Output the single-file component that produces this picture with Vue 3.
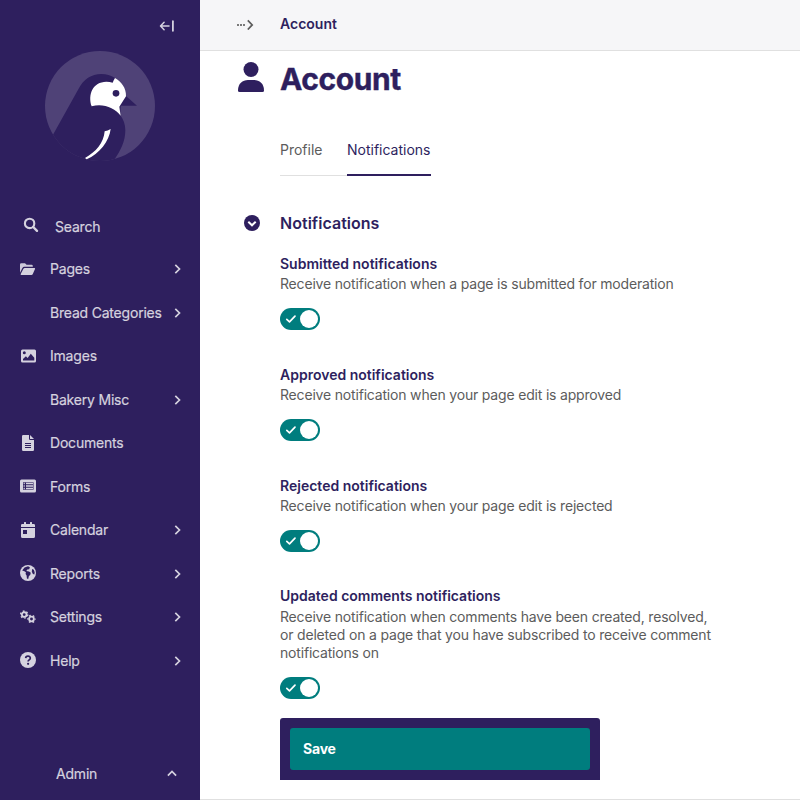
<script setup>
const menu = [
  { label: 'Pages', icon: 'folder', more: true },
  { label: 'Bread Categories', more: true },
  { label: 'Images', icon: 'image' },
  { label: 'Bakery Misc', more: true },
  { label: 'Documents', icon: 'doc' },
  { label: 'Forms', icon: 'form' },
  { label: 'Calendar', icon: 'date', more: true },
  { label: 'Reports', icon: 'globe', more: true },
  { label: 'Settings', icon: 'cogs', more: true },
  { label: 'Help', icon: 'help', more: true },
]

const fields = [
  { label: 'Submitted notifications', help: ['Receive notification when a page is submitted for moderation'] },
  { label: 'Approved notifications', help: ['Receive notification when your page edit is approved'] },
  { label: 'Rejected notifications', help: ['Receive notification when your page edit is rejected'] },
  {
    label: 'Updated comments notifications',
    help: [
      'Receive notification when comments have been created, resolved,',
      'or deleted on a page that you have subscribed to receive comment',
      'notifications on',
    ],
  },
]
</script>

<template>
  <div class="shell">
    <aside class="sidebar">
      <div class="collapse">
        <svg width="16" height="12" viewBox="0 0 16 12" fill="none" stroke="currentColor" stroke-width="1.5" stroke-linecap="round" stroke-linejoin="round">
          <path d="M10 6H1.700M5.100 2.200 1.500 6l3.600 3.800" />
          <path d="M13.900 1.200v9.600" stroke-width="1.800" />
        </svg>
      </div>
      <svg class="logo" viewBox="135 153 330 330">
        <defs>
          <clipPath id="disc"><circle cx="300" cy="318" r="165" /></clipPath>
        </defs>
        <circle cx="300" cy="318" r="165" fill="#4f4277" />
        <g clip-path="url(#disc)">
          <path d="M159 404 L235 268 C251 237 274 222 304 222 C319 222 333 226 345 234 L378 289 L362 318 L361 346 C370 358 376 374 376 391 C376 424 362 452 342 480 L300 490 L130 490Z" fill="#2e1f5e" />
          <path d="M377 287 L411 317.500 H360Z" fill="#2e1f5e" />
        </g>
        <path d="M275 319 C263 283 278 246 319 245 C326 245 332 246 338 248 C340 243 342 238 345 234 C364 245 379 264 378 289 L358 320 L362 347 C345 324 309 309 275 319Z" fill="#fff" />
        <circle cx="348" cy="280" r="10" fill="#2e1f5e" />
        <path d="M314 394 Q323 392 332 387 C328 422 298 463 260 478 L255 474 C288 456 311 429 314 394Z" fill="#fff" />
      </svg>
      <div class="search">
        <svg width="16" height="16" viewBox="0 0 16 16" fill="none" stroke="currentColor" stroke-width="2.100">
          <circle cx="6.600" cy="6.400" r="4.700" />
          <path d="m10.200 10 3.800 3.800" stroke-linecap="round" stroke-width="2.400" />
        </svg>
        <span>Search</span>
      </div>
      <nav class="menu">
        <a v-for="item in menu" :key="item.label" class="row">
          <span class="ico" :class="item.icon">
            <svg v-if="item.icon === 'folder'" width="16" height="16" viewBox="0 0 16 16" fill="currentColor">
              <path d="M0 12.300V3.500Q0 2.200 1.300 2.200H5l1.600 1.600h5q1.200 0 1.200 1.200v.8H4.300q-1.300 0-1.900 1.100L0 11.800z" opacity=".95" />
              <path d="m.7 13.100 2.600-5.200q.5-1 1.500-1h9.600q1.100 0 .6 1l-2.200 5.200q-.4.900-1.400.9H1.300Q.3 14 .7 13.100z" />
            </svg>
            <svg v-else-if="item.icon === 'image'" width="16" height="16" viewBox="0 0 16 16">
              <path fill="currentColor" fill-rule="evenodd" d="M2.500 1.500h12Q16 1.500 16 3v10q0 1.500-1.500 1.500h-12Q1 14.500 1 13V3q0-1.500 1.500-1.500zM4.300 3.300a1.500 1.500 0 1 0 0 3 1.500 1.500 0 0 0 0-3zM3 12.500h11.300V9.800L10.800 5.700 7.600 10 5.900 8.300 3 11z" />
            </svg>
            <svg v-else-if="item.icon === 'doc'" width="16" height="16" viewBox="0 0 16 16">
              <path fill="currentColor" fill-rule="evenodd" d="M3.200 0H9v3.800q0 1.200 1.200 1.200H14v9.800q0 1.200-1.200 1.200H3.200Q2 16 2 14.800V1.200Q2 0 3.200 0zM5 8v1h6V8zM5 10v1h6v-1zM5 12v1h6v-1z" />
              <path fill="currentColor" d="M10 0v4h4z" />
            </svg>
            <svg v-else-if="item.icon === 'form'" width="16" height="16" viewBox="0 0 16 16">
              <path fill="currentColor" fill-rule="evenodd" d="M1.500 1.500h13Q16 1.500 16 3v10q0 1.500-1.500 1.500h-13Q0 14.500 0 13V3q0-1.500 1.500-1.500zM3 4.300v7.500h10.500V4.300z" />
              <path stroke="currentColor" stroke-width="1.500" d="M3.600 5.600h1.200M3.600 8.100h1.200M3.600 10.600h1.200M6 5.600h7M6 8.100h7M6 10.600h7" />
            </svg>
            <svg v-else-if="item.icon === 'date'" width="16" height="16" viewBox="0 0 16 16" fill="currentColor">
              <path d="M2.300 2H4V.5Q4 0 4.500 0h1Q6 0 6 .5V2h4V.5q0-.5.500-.5h1q.500 0 .500.500V2h1.700Q15 2 15 3.300V5H1V3.300Q1 2 2.300 2z" />
              <path fill-rule="evenodd" d="M1 6h14v8.500q0 1.500-1.500 1.500h-11Q1 16 1 14.500zM3 8v4h4V8z" />
            </svg>
            <svg v-else-if="item.icon === 'globe'" width="16" height="16" viewBox="0 0 16 16">
              <circle cx="8" cy="8" r="8" fill="currentColor" />
              <path fill="#2e1f5e" d="M4.500 2.600 8 1.300 9.900 2.200 9.200 4.200 7.300 4.600 6.300 6.100 9 6.500 10.800 7.700 10.200 9.900 8.900 11 8.200 13.900 6.900 13.500 6.600 10.600 5.600 9 5.900 7.300 4.400 6.200 2.200 5.500zM12.100 4.100 13.800 4.800 14.700 7.200 14.400 9.500 12.900 9 11.800 6.700z" />
            </svg>
            <svg v-else-if="item.icon === 'cogs'" width="16" height="16" viewBox="0 0 16 16" fill="none" stroke="currentColor">
              <circle cx="4.200" cy="5.600" r="2.350" stroke-width="1.800" />
              <circle cx="4.200" cy="5.600" r="3.600" stroke-width="1.300" stroke-dasharray="1.700 2.070" />
              <circle cx="11.500" cy="10" r="2.350" stroke-width="1.800" />
              <circle cx="11.500" cy="10" r="3.600" stroke-width="1.300" stroke-dasharray="1.700 2.070" stroke-dashoffset="1" />
            </svg>
            <svg v-else-if="item.icon === 'help'" width="16" height="16" viewBox="0 0 16 16">
              <circle cx="8" cy="8" r="8" fill="currentColor" />
              <path d="M5.700 6.100C5.800 3.500 10.400 3.500 10.300 6.300 10.200 7.900 8.100 7.800 8.100 9.500" fill="none" stroke="#2e1f5e" stroke-width="1.700" />
              <circle cx="8.100" cy="11.800" r="1.100" fill="#2e1f5e" />
            </svg>
          </span>
          <span class="text">{{ item.label }}</span>
          <svg v-if="item.more" class="chev" width="8" height="12" viewBox="0 0 8 12"><path d="m1.300 1.800 4.200 4.200-4.200 4.200" /></svg>
        </a>
      </nav>
      <div class="user">
        <span>Admin</span>
        <svg class="chev" width="12" height="8" viewBox="0 0 12 8"><path d="m1.900 5.600 4.100-4.200 4.100 4.200" /></svg>
      </div>
    </aside>

    <main class="main">
      <header class="top">
        <svg width="18" height="12" viewBox="0 0 18 12">
          <path d="M1 6h2v2H1zM4 6h2v2H4zM7 6h2v2H7z" fill="#7a7a7a" />
          <path d="m11.800 2.300 4.400 4.600-4.400 4.600" fill="none" stroke="#5c5c5c" stroke-width="1.700" />
        </svg>
        <span>Account</span>
      </header>
      <div class="title">
        <svg width="26" height="30" viewBox="0 0 26 30" fill="#2e1f5e">
          <circle cx="13" cy="7.500" r="7.500" />
          <path d="M0 28.500C0 21.500 4.500 18 10 18h6c5.500 0 10 3.500 10 10.500Q26 30 24.500 30h-23Q0 30 0 28.500z" />
        </svg>
        <h1>Account</h1>
      </div>
      <div class="tabs">
        <a class="tab">Profile</a>
        <a class="tab active">Notifications</a>
      </div>
      <div class="section">
        <svg width="16" height="16" viewBox="0 0 16 16">
          <circle cx="8" cy="8" r="8" fill="#2e1f5e" />
          <path d="m4.300 6.700 3.700 3.600 3.700-3.600" fill="none" stroke="#fff" stroke-width="2" />
        </svg>
        <h2>Notifications</h2>
      </div>
      <div class="fields">
        <div v-for="f in fields" :key="f.label" class="field">
          <div class="label">{{ f.label }}</div>
          <div class="hint"><div v-for="l in f.help" :key="l">{{ l }}</div></div>
          <div class="toggle">
            <svg width="12" height="10" viewBox="0 0 12 10"><path d="m1.800 5.300 2.700 2.500 5.500-5.600" /></svg>
            <span class="knob"></span>
          </div>
        </div>
      </div>
      <footer class="actions"><button class="save">Save</button></footer>
      <div class="rule"></div>
    </main>
  </div>
</template>

<style>
body { margin: 0; background: #fff; }
</style>

<style scoped>
* { box-sizing: border-box; }
.shell { display: flex; width: 800px; height: 800px; overflow: hidden; font: 400 14px/18px Inter, "Liberation Sans", sans-serif; }
.sidebar { display: flex; flex-direction: column; width: 200px; height: 800px; background: #2e1f5e; color: #d5d2df; letter-spacing: -0.2px; -webkit-text-stroke: 0.2px currentColor; }
.collapse { display: flex; height: 51px; padding: 20px 0 0 159px; }
.logo { width: 110px; height: 110px; margin-left: 45px; flex: none; }
.search { display: flex; height: 44px; margin-top: 43px; padding: 13px 0 0 23px; gap: 16px; }
.search span { padding-top: 1px; }
.menu { display: flex; flex-direction: column; margin-top: -0.500px; }
.row { display: flex; align-items: center; height: 43.500px; padding: 0 18px 0 20px; }
.ico { display: flex; width: 16px; height: 16px; margin-right: 14px; flex: none; }
.form, .globe, .help { margin-bottom: 2px; }
.text { flex: 1; white-space: nowrap; }
.chev { fill: none; stroke: currentColor; stroke-width: 1.700; }
.user { display: flex; align-items: center; justify-content: space-between; margin-top: auto; height: 53px; padding: 0 22px 0 56px; }
.main { display: flex; flex-direction: column; width: 600px; height: 800px; color: #5c5c5c; }
.top { display: flex; align-items: center; height: 51px; flex: none; padding: 0 0 2px 36px; gap: 26px; background: #f6f6f8; border-bottom: 1px solid #e0e0e0; color: #2e1f5e; font-weight: 600; }
.title { display: flex; align-items: flex-start; height: 54px; padding: 11px 0 0 38px; gap: 16px; }
h1, h2 { margin: 0; color: #2e1f5e; }
h1 { font-size: 30px; line-height: 34px; font-weight: 700; letter-spacing: -0.400px; -webkit-text-stroke: 0.400px currentColor; }
.tabs { display: flex; width: 151px; height: 46px; margin: 25px 0 0 80px; }
.tab { padding-top: 11px; border-bottom: 1px solid #e0e0e0; width: 67px; }
.tab.active { width: 84px; color: #2e1f5e; border-bottom: 2px solid #2e1f5e; }
.section { display: flex; align-items: center; gap: 20px; height: 24px; margin: 35px 0 0 44px; }
h2 { font-size: 16px; line-height: 24px; font-weight: 600; letter-spacing: 0.030px; }
.fields { padding: 20px 0 0 80px; }
.field { margin-bottom: 36px; }
.field:nth-child(3) { margin-bottom: 35px; }
.field:last-child { margin-bottom: 0; }
.label { color: #2e1f5e; font-weight: 600; height: 20px; white-space: nowrap; }
.field:last-child .label { height: 21px; }
.hint { white-space: nowrap; letter-spacing: -0.185px; }
.toggle { display: flex; align-items: center; justify-content: space-between; width: 40px; height: 22px; margin-top: 15px; padding: 0 2px 0 5px; border-radius: 11px; background: #007d7e; }
.toggle path { fill: none; stroke: #fff; stroke-width: 1.700; stroke-linecap: round; stroke-linejoin: round; }
.knob { width: 18px; height: 18px; border-radius: 50%; background: #fff; }
.actions { width: 320px; height: 62px; margin: auto 0 19px 80px; padding: 10px; background: #2e1f5e; border-radius: 3px 3px 0 0; flex: none; }
.save { display: block; width: 300px; height: 42px; border: 0; border-radius: 3px; background: #007d7e; color: #fff; font: 700 14px/18px Inter, "Liberation Sans", sans-serif; text-align: left; padding: 0 13px; letter-spacing: -0.200px; }
.rule { height: 1px; flex: none; background: #e0e0e0; }
</style>
